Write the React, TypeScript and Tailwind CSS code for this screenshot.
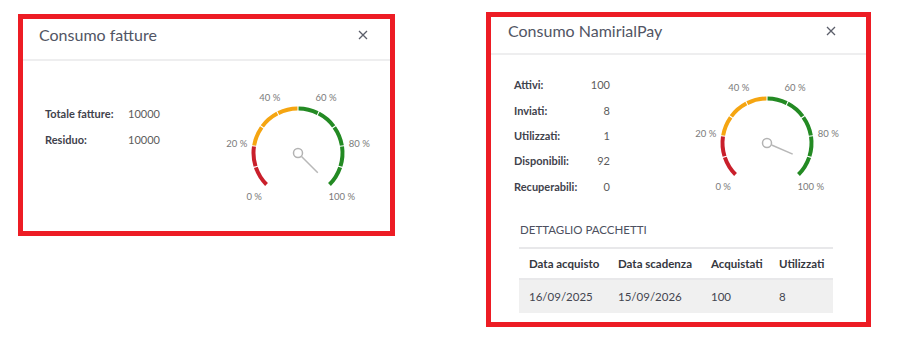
import React from "react";

const CX = 75;
const CY = 65;

function polar(r: number, deg: number) {
  const a = (deg * Math.PI) / 180;
  return [CX + r * Math.cos(a), CY + r * Math.sin(a)];
}

function arcPath(r: number, a1: number, a2: number) {
  const [x1, y1] = polar(r, a1);
  const [x2, y2] = polar(r, a2);
  const large = a2 - a1 > 180 ? 1 : 0;
  return `M ${x1.toFixed(2)} ${y1.toFixed(2)} A ${r} ${r} 0 ${large} 1 ${x2.toFixed(2)} ${y2.toFixed(2)}`;
}

function Gauge({ value }: { value: number }) {
  const segs = Array.from({ length: 10 }, (_, i) => i);
  const color = (i: number) => (i < 2 ? "#c91f2b" : i < 5 ? "#f5a511" : "#238a23");
  const labels = [0, 20, 40, 60, 80, 100];
  const needleAngle = 135 + (value / 100) * 270;
  const [nx1, ny1] = polar(5, needleAngle);
  const [nx2, ny2] = polar(28, needleAngle);
  return (
    <svg width="150" height="125" viewBox="0 0 150 125" className="block shrink-0">
      {segs.map((i) => {
        const a1 = 135 + i * 27 + (i === 0 ? 0 : 0.7);
        const a2 = 135 + (i + 1) * 27 - (i === 9 ? 0 : 0.7);
        return <path key={i} d={arcPath(44.5, a1, a2)} stroke={color(i)} strokeWidth={4} fill="none" />;
      })}
      {labels.map((l) => {
        const [x, y] = polar(62, 135 + (l / 100) * 270);
        return (
          <text
            key={l}
            x={x}
            y={y}
            textAnchor="middle"
            dominantBaseline="central"
            fontSize="9.5"
            fill="#7a7a7a"
            fontFamily="Lato, sans-serif"
          >
            {l} %
          </text>
        );
      })}
      <line x1={nx1} y1={ny1} x2={nx2} y2={ny2} stroke="#b8b8b8" strokeWidth={1.5} />
      <circle cx={CX} cy={CY} r={4.5} fill="white" stroke="#b3b3b3" strokeWidth={1.5} />
    </svg>
  );
}

function CloseX() {
  return (
    <svg width="10" height="10" viewBox="0 0 10 10" className="block">
      <path d="M1 1 L9 9 M9 1 L1 9" stroke="#5b5e6a" strokeWidth="1.3" />
    </svg>
  );
}

export default function App() {
  return (
    <div
      className="w-[909px] h-[359px] bg-white flex items-start pt-[12px] pl-[18px]"
      style={{ fontFamily: "Lato, 'Noto Sans', sans-serif" }}
    >
      {/* Left dialog */}
      <div className="w-[377px] h-[222px] mt-[2px] border-[5px] border-[#ed1c24] bg-white flex flex-col">
        <div className="h-[42px] border-b-2 border-[#eeeeef] flex items-start justify-between pt-[6px] pl-[16px] pr-[22px]">
          <div className="text-[16px] leading-[20px] text-[#515564]">Consumo fatture</div>
          <div className="h-[20px] flex items-center">
            <CloseX />
          </div>
        </div>
        <div className="flex items-start pl-[22px]">
          <div className="w-[178px] mt-[40px] text-[11px]">
            <div className="flex h-[26px] items-center">
              <div className="w-[83px] font-bold text-[#3f424c]">Totale fatture:</div>
              <div className="text-[#5c5c5c]">10000</div>
            </div>
            <div className="flex h-[26px] items-center">
              <div className="w-[83px] font-bold text-[#3f424c]">Residuo:</div>
              <div className="text-[#5c5c5c]">10000</div>
            </div>
          </div>
          <div className="mt-[27px]">
            <Gauge value={100} />
          </div>
        </div>
      </div>

      {/* Right dialog */}
      <div className="w-[385px] h-[315px] ml-[91px] border-[5px] border-[#ed1c24] bg-white flex flex-col">
        <div className="h-[38px] border-b-2 border-[#eeeeef] flex items-start justify-between pt-[4px] pl-[17px] pr-[30px]">
          <div className="text-[16px] leading-[20px] text-[#515564]">Consumo NamirialPay</div>
          <div className="h-[20px] flex items-center">
            <CloseX />
          </div>
        </div>
        <div className="flex items-start pl-[23px]">
          <div className="w-[96px] mt-[18px] text-[11px]">
            {[
              ["Attivi:", "100"],
              ["Inviati:", "8"],
              ["Utilizzati:", "1"],
              ["Disponibili:", "92"],
              ["Recuperabili:", "0"],
            ].map(([l, v]) => (
              <div key={l} className="flex h-[25.3px] items-center justify-between">
                <div className="font-bold text-[#3f424c]">{l}</div>
                <div className="text-[#5c5c5c]">{v}</div>
              </div>
            ))}
          </div>
          <div className="mt-[23px] ml-[82px]">
            <Gauge value={92} />
          </div>
        </div>
        <div className="pl-[29px] mt-[19px] text-[11.5px] leading-[16px] text-[#4d5060]">
          DETTAGLIO PACCHETTI
        </div>
        <div className="ml-[28px] mt-[9px] w-[314px] border-t-2 border-[#e8e8ea] text-[11.5px]">
          <div className="flex h-[31px] items-center border-b-2 border-[#e8e8ea] font-bold text-[#353740]">
            <div className="w-[89px] pl-[10px] whitespace-nowrap">Data acquisto</div>
            <div className="w-[93px] pl-[10px] whitespace-nowrap">Data scadenza</div>
            <div className="w-[68px] pl-[10px] whitespace-nowrap">Acquistati</div>
            <div className="flex-1 pl-[10px] whitespace-nowrap">Utilizzati</div>
          </div>
          <div className="flex h-[33px] items-center bg-[#f0f0f0] text-[#444650]">
            <div className="w-[89px] pl-[10px]">16/09/2025</div>
            <div className="w-[93px] pl-[10px]">15/09/2026</div>
            <div className="w-[68px] pl-[10px]">100</div>
            <div className="flex-1 pl-[10px]">8</div>
          </div>
        </div>
      </div>
    </div>
  );
}
